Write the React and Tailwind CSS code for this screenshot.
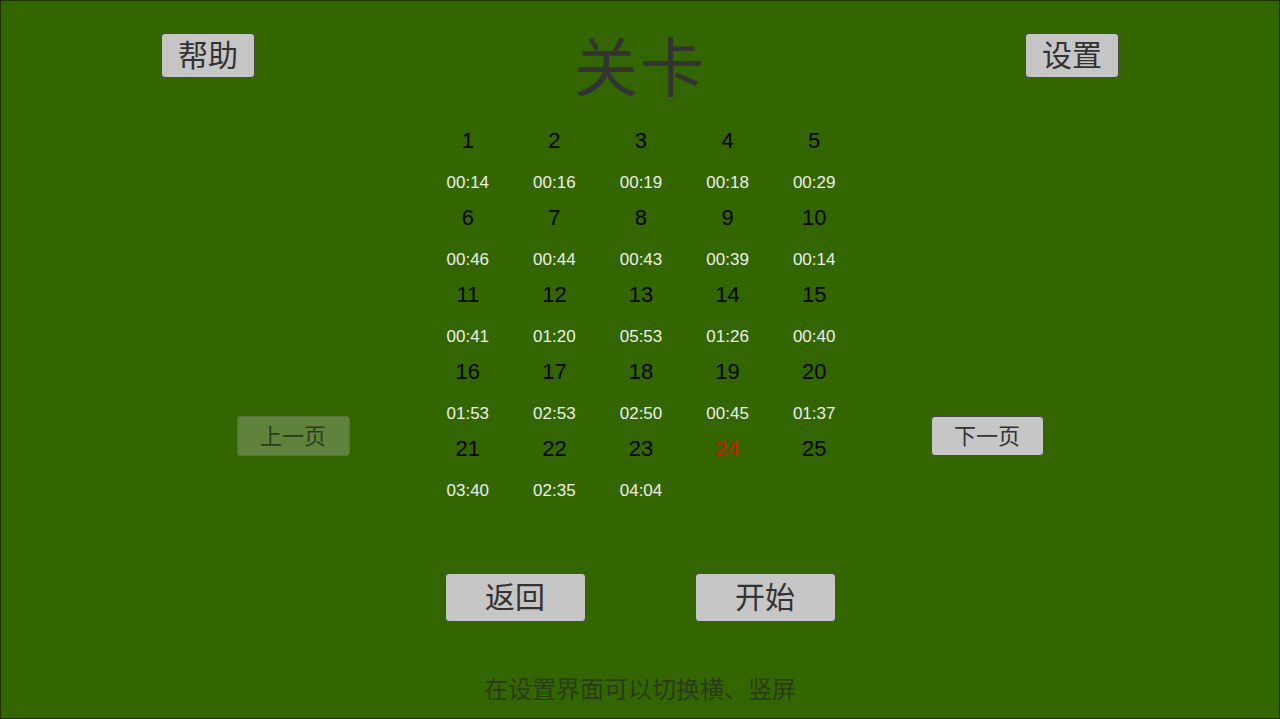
import React from 'react'

const FONT = { fontFamily: '"Liberation Sans", "Noto Sans CJK SC", Arial, sans-serif' }

const levels = [
  ['1', '00:14'], ['2', '00:16'], ['3', '00:19'], ['4', '00:18'], ['5', '00:29'],
  ['6', '00:46'], ['7', '00:44'], ['8', '00:43'], ['9', '00:39'], ['10', '00:14'],
  ['11', '00:41'], ['12', '01:20'], ['13', '05:53'], ['14', '01:26'], ['15', '00:40'],
  ['16', '01:53'], ['17', '02:53'], ['18', '02:50'], ['19', '00:45'], ['20', '01:37'],
  ['21', '03:40'], ['22', '02:35'], ['23', '04:04'], ['24', null], ['25', null],
]

const LevelCell = ({ num, time, current }) => (
  <div className="h-[77px] flex flex-col items-center">
    <div className={`h-[28px] leading-[28px] text-[22px] ${current ? 'text-[#cc1a00]' : 'text-[#050505]'}`}>
      {num}
    </div>
    {time && (
      <div className="mt-[18px] h-[20px] leading-[20px] text-[17px] text-[#eeeeee]">{time}</div>
    )}
  </div>
)

const GrayButton = ({ children, className = '' }) => (
  <button
    className={`bg-[#c6c6c6] border border-[#4a4a4a] rounded-[4px] text-[#333333] flex items-center justify-center ${className}`}
  >
    {children}
  </button>
)

export default function App() {
  return (
    <div
      className="w-full h-[719px] bg-[#336600] border border-[#1e3300] flex flex-col overflow-hidden"
      style={FONT}
    >
      {/* Top bar */}
      <div className="flex items-start justify-between px-[160px] h-[100px]">
        <GrayButton className="mt-[32px] w-[94px] h-[45px] text-[30px]">帮助</GrayButton>
        <h1 className="mt-[36px] text-[64px] leading-[64px] text-[#333333] tracking-[2px]">关卡</h1>
        <GrayButton className="mt-[32px] w-[94px] h-[45px] text-[30px]">设置</GrayButton>
      </div>

      {/* Levels + paging */}
      <div className="mt-[26px] flex items-start justify-center">
        <button className="mt-[289px] w-[113px] h-[40px] rounded-[4px] bg-[#c6c6c6]/30 border border-[#4a4a4a]/30 text-[#2c3b20] text-[22px] flex items-center justify-center">
          上一页
        </button>
        <div className="ml-[75px] mr-[73px] grid grid-cols-5 w-[433px]">
          {levels.map(([n, t]) => (
            <LevelCell key={n} num={n} time={t} current={n === '24'} />
          ))}
        </div>
        <GrayButton className="mt-[289px] w-[113px] h-[40px] text-[22px]">下一页</GrayButton>
      </div>

      {/* Bottom buttons */}
      <div className="mt-[61px] flex justify-center gap-[109px]">
        <GrayButton className="w-[141px] h-[49px] text-[30px]">返回</GrayButton>
        <GrayButton className="w-[141px] h-[49px] text-[30px]">开始</GrayButton>
      </div>

      <p className="mt-[53px] text-center text-[24px] leading-[30px] text-[#2a3b1c]">
        在设置界面可以切换横、竖屏
      </p>
    </div>
  )
}
